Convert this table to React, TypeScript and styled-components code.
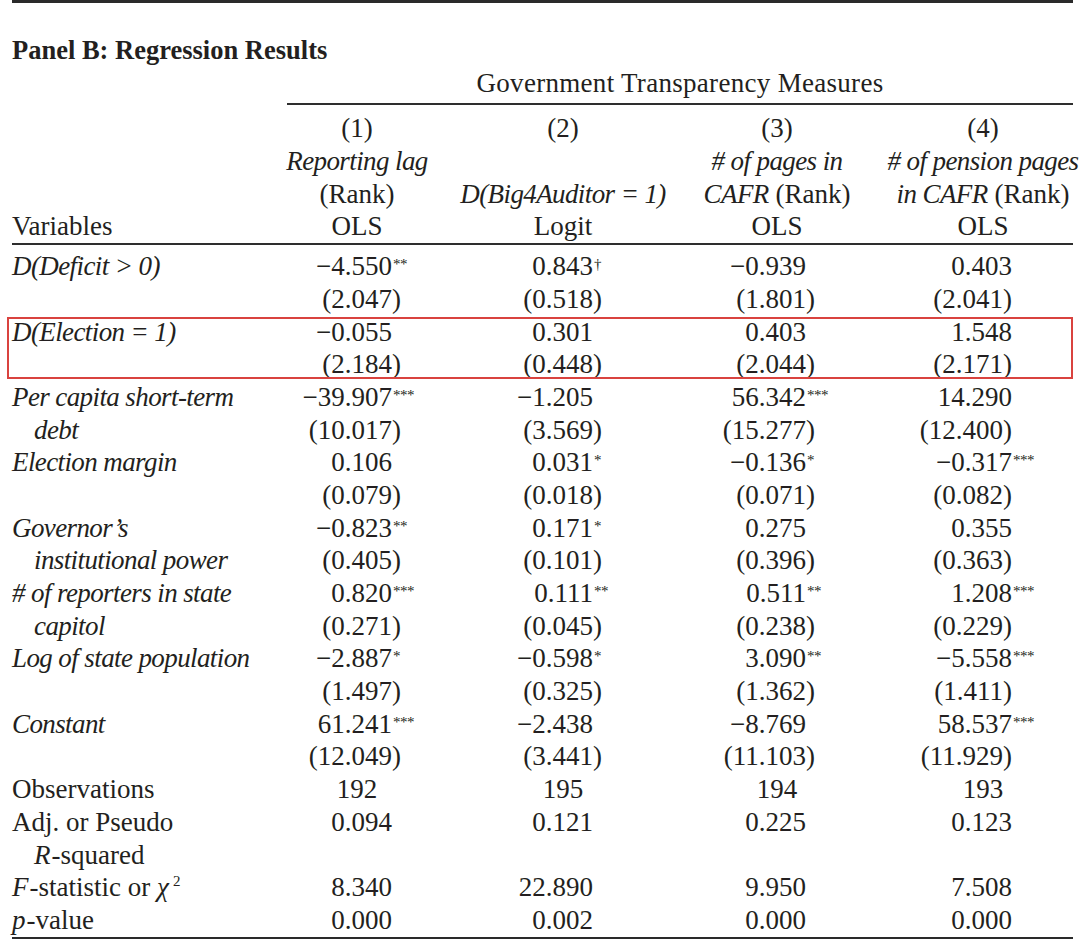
import React from "react";
import styled, { createGlobalStyle } from "styled-components";

const Global = createGlobalStyle`
  html, body { margin: 0; padding: 0; background: #ffffff; }
  body {
    font-family: "Liberation Serif", "Times New Roman", serif;
    color: #231f20;
    -webkit-font-smoothing: antialiased;
  }
`;

const COLS = "237px 216px 196px 232px 180px";
const PAD = [73, 68, 87, 61];
const HANG_PAREN = [true, true, true, false];
const ROW_H = 32.7;

const Page = styled.div`
  width: 1061px;
  margin-left: 12px;
  border-top: 3px solid #2a2a2a;
  padding-top: 31px;
  font-size: 27px;
`;

const Title = styled.h2`
  margin: 0;
  font-size: 26.5px;
  font-weight: 700;
  line-height: ${ROW_H}px;
  white-space: nowrap;
`;

const Grid = styled.div`
  display: grid;
  grid-template-columns: ${COLS};
  height: ${ROW_H}px;
  line-height: ${ROW_H}px;
`;

const SpanRow = styled(Grid)`
  height: auto;
`;

const SpanHead = styled.div`
  grid-column: 2 / -1;
  margin-left: 38px;
  text-align: center;
  padding-bottom: 4px;
  border-bottom: 2px solid #2e2e2e;
  white-space: nowrap;
  letter-spacing: 0.3px;
`;

const HeadBlock = styled.div`
  margin-top: 7px;
  border-bottom: 2px solid #2e2e2e;
`;

const Body = styled.div`
  padding-top: 5px;
  border-bottom: 2.5px solid #2a2a2a;
`;

const HeadCell = styled.div`
  display: flex;
  justify-content: center;
  white-space: nowrap;
`;

const LabelCell = styled.div<{ $indent?: boolean }>`
  padding-left: ${(p) => (p.$indent ? 22 : 0)}px;
  white-space: nowrap;
`;

const ValCell = styled.div<{ $pr: number; $center?: boolean }>`
  text-align: ${(p) => (p.$center ? "center" : "right")};
  padding-right: ${(p) => p.$pr}px;
  white-space: nowrap;
`;

const Hang = styled.span`
  display: inline-block;
  width: 0;
  overflow: visible;
  white-space: nowrap;
  text-align: left;
  line-height: 0;
`;

const Stars = styled.span`
  font-size: 15px;
  line-height: 0;
  vertical-align: 6px;
  margin-left: 1px;
  letter-spacing: -0.5px;
`;

const Sup2 = styled.span`
  font-size: 15px;
  line-height: 0;
  vertical-align: 10px;
  margin-left: 3px;
`;

const I = styled.i`
  font-style: italic;
  letter-spacing: -0.6px;
`;

const Var = styled.i`
  font-style: italic;
  margin-right: 1px;
`;

const Highlight = styled.div`
  position: relative;
  &::after {
    content: "";
    position: absolute;
    top: 1px;
    bottom: 2px;
    left: -5px;
    right: 0;
    border: 2.5px solid #d9433f;
    pointer-events: none;
  }
`;

interface DataRow {
  label?: React.ReactNode;
  indent?: boolean;
  center?: boolean;
  vals: (string | null)[];
}

const rows: DataRow[] = [
  { label: <I>D(Deficit &gt; 0)</I>, vals: ["−4.550**", "0.843†", "−0.939", "0.403"] },
  { vals: ["(2.047)", "(0.518)", "(1.801)", "(2.041)"] },
  { label: <I>D(Election = 1)</I>, vals: ["−0.055", "0.301", "0.403", "1.548"] },
  { vals: ["(2.184)", "(0.448)", "(2.044)", "(2.171)"] },
  { label: <I>Per capita short-term</I>, vals: ["−39.907***", "−1.205", "56.342***", "14.290"] },
  { label: <I>debt</I>, indent: true, vals: ["(10.017)", "(3.569)", "(15.277)", "(12.400)"] },
  { label: <I>Election margin</I>, vals: ["0.106", "0.031*", "−0.136*", "−0.317***"] },
  { vals: ["(0.079)", "(0.018)", "(0.071)", "(0.082)"] },
  { label: <I>Governor’s</I>, vals: ["−0.823**", "0.171*", "0.275", "0.355"] },
  { label: <I>institutional power</I>, indent: true, vals: ["(0.405)", "(0.101)", "(0.396)", "(0.363)"] },
  { label: <I># of reporters in state</I>, vals: ["0.820***", "0.111**", "0.511**", "1.208***"] },
  { label: <I>capitol</I>, indent: true, vals: ["(0.271)", "(0.045)", "(0.238)", "(0.229)"] },
  { label: <I>Log of state population</I>, vals: ["−2.887*", "−0.598*", "3.090**", "−5.558***"] },
  { vals: ["(1.497)", "(0.325)", "(1.362)", "(1.411)"] },
  { label: <I>Constant</I>, vals: ["61.241***", "−2.438", "−8.769", "58.537***"] },
  { vals: ["(12.049)", "(3.441)", "(11.103)", "(11.929)"] },
  { label: "Observations", center: true, vals: ["192", "195", "194", "193"] },
  { label: "Adj. or Pseudo", vals: ["0.094", "0.121", "0.225", "0.123"] },
  { label: <><Var>R</Var>-squared</>, indent: true, vals: [null, null, null, null] },
  {
    label: (
      <>
        <Var>F</Var>-statistic or <Var>χ</Var>
        <Sup2>2</Sup2>
      </>
    ),
    vals: ["8.340", "22.890", "9.950", "7.508"],
  },
  { label: <><Var>p</Var>-value</>, vals: ["0.000", "0.002", "0.000", "0.000"] },
];

const headRows: React.ReactNode[][] = [
  [null, "(1)", "(2)", "(3)", "(4)"],
  [null, <I>Reporting lag</I>, null, <I># of pages in</I>, <I># of pension pages</I>],
  [
    null,
    "(Rank)",
    <I>D(Big4Auditor = 1)</I>,
    <>
      <I>CAFR</I> (Rank)
    </>,
    <>
      <I>in CAFR</I> (Rank)
    </>,
  ],
  ["Variables", "OLS", "Logit", "OLS", "OLS"],
];

function Value({ v, col, center }: { v: string | null; col: number; center?: boolean }) {
  if (v === null) return <ValCell $pr={0} />;
  if (center) return <ValCell $pr={0} $center>{v}</ValCell>;
  const m = v.match(/^(.*?)(\)?)([*†]*)$/);
  const body = m ? m[1] : v;
  const paren = m ? m[2] : "";
  const stars = m ? m[3] : "";
  const hangParen = HANG_PAREN[col];
  const hangText = hangParen ? paren : "";
  return (
    <ValCell $pr={PAD[col]}>
      {body}
      {!hangParen && paren}
      {(hangText || stars) && (
        <Hang>
          {hangText}
          {stars && <Stars>{stars}</Stars>}
        </Hang>
      )}
    </ValCell>
  );
}

function Row({ r }: { r: DataRow }) {
  return (
    <Grid>
      <LabelCell $indent={r.indent}>{r.label}</LabelCell>
      {r.vals.map((v, i) => (
        <Value key={i} v={v} col={i} center={r.center} />
      ))}
    </Grid>
  );
}

export default function App() {
  return (
    <>
      <Global />
      <Page>
        <Title>Panel B: Regression Results</Title>
        <SpanRow>
          <SpanHead>Government Transparency Measures</SpanHead>
        </SpanRow>
        <HeadBlock>
          {headRows.map((hr, ri) => (
            <Grid key={ri}>
              <LabelCell>{hr[0]}</LabelCell>
              {hr.slice(1).map((c, ci) => (
                <HeadCell key={ci}>
                  <span>{c}</span>
                </HeadCell>
              ))}
            </Grid>
          ))}
        </HeadBlock>
        <Body>
          <Row r={rows[0]} />
          <Row r={rows[1]} />
          <Highlight>
            <Row r={rows[2]} />
            <Row r={rows[3]} />
          </Highlight>
          {rows.slice(4).map((r, i) => (
            <Row key={i} r={r} />
          ))}
        </Body>
      </Page>
    </>
  );
}
